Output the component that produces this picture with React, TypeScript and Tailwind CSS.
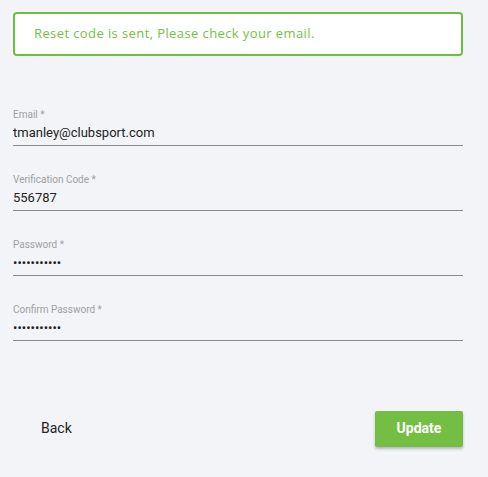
import React from 'react';

const Field = ({ label, value, password }: { label: string; value: string; password?: boolean }) => (
  <div className="flex flex-col">
    <label className="text-[10px] leading-[12px] text-[#a0a0a0]">{label}</label>
    <div className="h-[25px] border-b border-[#8a8a8a] pt-[1px] text-[13px] leading-[22px] text-[#222]">
      {password ? '•••••••••••' : value}
    </div>
  </div>
);

export default function App() {
  return (
    <div className="min-h-[477px] w-[488px] bg-[#f3f4f8] pl-[13px] pr-[25px] pt-[12px] font-['Roboto',sans-serif]">
      <div className="flex h-[44px] items-center rounded-[4px] border-2 border-[#6cbf3e] bg-white px-[19px] font-['Open_Sans',sans-serif] text-[13px] tracking-[0.4px] text-[#72c243]">
        Reset code is sent, Please check your email.
      </div>

      <div className="mt-[53px] flex flex-col gap-[28px]">
        <Field label="Email *" value="tmanley@clubsport.com" />
        <Field label="Verification Code *" value="556787" />
        <Field label="Password *" value="" password />
        <Field label="Confirm Password *" value="" password />
      </div>

      <div className="mt-[69px] flex items-center justify-between">
        <button className="px-[28px] py-[8px] text-[14px] text-[#222]">Back</button>
        <button className="h-[36px] w-[88px] rounded-[2px] bg-[#74bf43] text-[14px] font-bold text-white shadow-[0_2px_3px_rgba(0,0,0,0.25)]">
          Update
        </button>
      </div>
    </div>
  );
}
